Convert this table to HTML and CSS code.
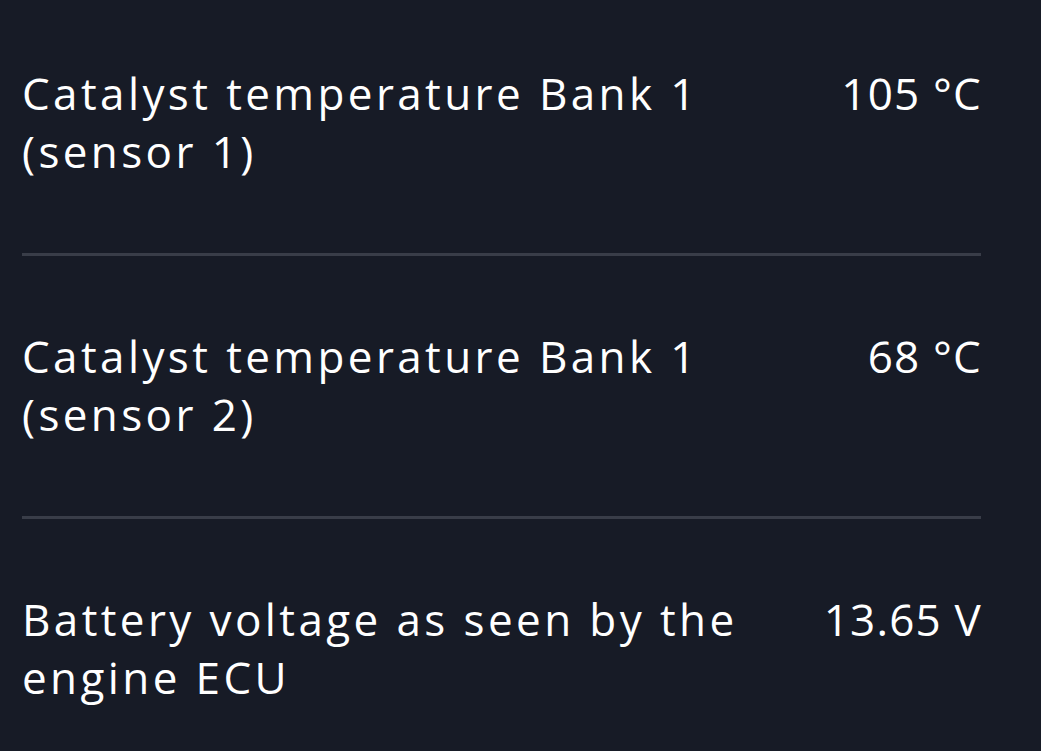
FILE: index.html
```html
<!DOCTYPE html>
<html lang="en">
<head>
<meta charset="utf-8">
<title>Sensor readings</title>
<link rel="stylesheet" href="styles.css">
</head>
<body>
<ul class="readings">
  <li class="reading">
    <span class="label">Catalyst temperature Bank 1 (sensor 1)</span>
    <span class="value">105 °C</span>
  </li>
  <li class="reading">
    <span class="label">Catalyst temperature Bank 1 (sensor 2)</span>
    <span class="value">68 °C</span>
  </li>
  <li class="reading">
    <span class="label">Battery voltage as seen by the engine ECU</span>
    <span class="value">13.65 V</span>
  </li>
</ul>
</body>
</html>
```
FILE: styles.css
```css
html, body {
  margin: 0;
  padding: 0;
  background: #171b26;
}
body {
  font-family: "Open Sans", "Liberation Sans", sans-serif;
  color: #ffffff;
  overflow: hidden;
  height: 751px;
}
.readings {
  list-style: none;
  margin: -7px 0 0 0;
  padding: 0 60px 0 22px;
}
.reading {
  display: flex;
  justify-content: space-between;
  align-items: flex-start;
  gap: 48px;
  padding: 71px 0 73px;
  border-bottom: 3px solid #393d48;
  font-size: 44px;
  line-height: 58px;
}
.label {
  max-width: 740px;
  letter-spacing: 3.4px;
}
.value {
  white-space: nowrap;
  text-align: right;
  letter-spacing: 1.2px;
  margin-right: -1px;
}
```
